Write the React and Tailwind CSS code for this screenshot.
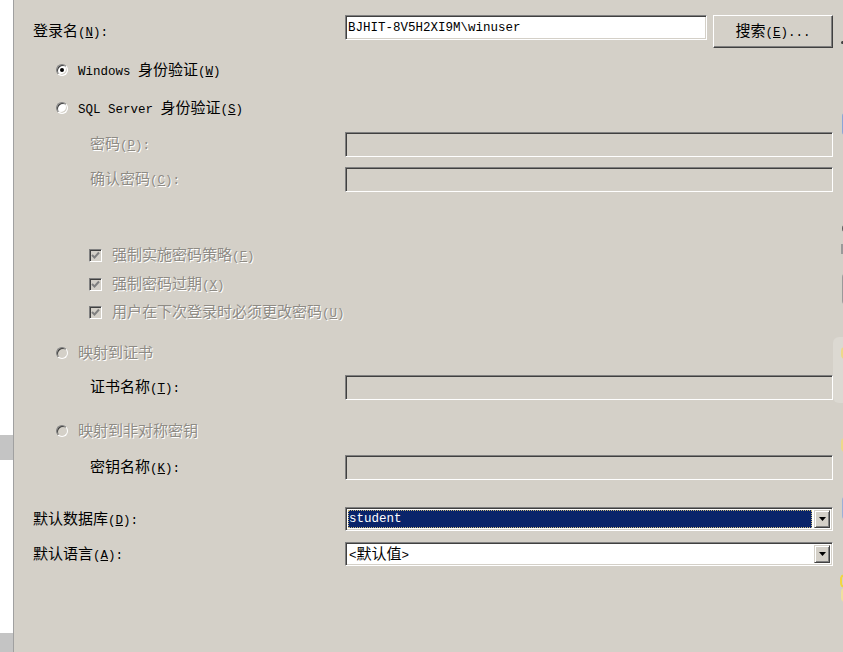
import React from 'react';

const CJK = /([\u2E80-\u9FFF\uFF00-\uFFEF\u3000-\u303F]+)/;

// Mixed run: CJK at SimSun-like 15px, latin half-width mono
const Txt = ({ s }) => {
    const parts = s.split(/(&.)/);
    return (
        <span className="whitespace-pre">
            {parts.map((p, i) => {
                if (p.startsWith('&') && p.length === 2) {
                    return (
                        <span key={i} className="underline text-[12.5px] font-['Liberation_Mono',monospace]">{p[1]}</span>
                    );
                }
                return p.split(CJK).map((r, j) =>
                    CJK.test(r) ? (
                        <span key={i + '-' + j} className="text-[15px] font-['Noto_Sans_CJK_SC',sans-serif]">{r}</span>
                    ) : (
                        <span key={i + '-' + j} className="text-[12.5px] font-['Liberation_Mono',monospace]">{r}</span>
                    )
                );
            })}
        </span>
    );
};

const Label = ({ s, off }) => (
    <div className={`leading-[16px] ${off ? 'text-[#8e8b85] [text-shadow:1px_1px_0_#ffffff]' : 'text-black'}`}>
        <Txt s={s} />
    </div>
);

const Sunken = ({ className = '', children }) => (
    <div className={`border border-t-[#808080] border-l-[#808080] border-b-white border-r-white shadow-[inset_1px_1px_0_#404040,inset_-1px_-1px_0_#d4d0c8] ${className}`}>
        {children}
    </div>
);

const Radio = ({ on, off }) => (
    <div className={`w-[12px] h-[12px] rounded-full border border-t-[#808080] border-l-[#808080] border-b-white border-r-white shadow-[inset_1px_1px_0_#404040,inset_-1px_-1px_0_#d4d0c8] flex items-center justify-center ${off ? 'bg-[#d4d0c8]' : 'bg-white'}`}>
        {on && <div className="w-[4px] h-[4px] rounded-full bg-black" />}
    </div>
);

const Check = () => (
    <Sunken className="w-[13px] h-[13px] bg-[#d4d0c8] flex items-center justify-center">
        <svg width="9" height="9" viewBox="0 0 9 9">
            <polyline points="1,4 3.5,6.5 8,1.5" fill="none" stroke="#808080" strokeWidth="2" />
        </svg>
    </Sunken>
);

const Arrow = () => (
    <div className="w-[16px] h-full border border-t-[#d4d0c8] border-l-[#d4d0c8] border-b-[#404040] border-r-[#404040] shadow-[inset_1px_1px_0_#ffffff,inset_-1px_-1px_0_#808080] bg-[#d4d0c8] flex items-center justify-center">
        <svg width="7" height="4" viewBox="0 0 7 4">
            <polygon points="0,0 7,0 3.5,4" fill="#000" />
        </svg>
    </div>
);

const FieldRow = ({ label, mt, dim, labelPad = 'pl-[57px]' }) => (
    <div className={`flex items-center h-[25px] ${mt}`}>
        <div className={`w-[312px] shrink-0 ${labelPad}`}>
            <Label s={label} off={dim} />
        </div>
        <Sunken className="w-[488px] h-[25px] bg-[#d4d0c8]" />
    </div>
);

const RadioRow = ({ label, mt, on, off }) => (
    <div className={`flex items-center h-[20px] pl-[23px] gap-[10px] ${mt}`}>
        <Radio on={on} off={off} />
        <Label s={label} off={off} />
    </div>
);

const CheckRow = ({ label, mt }) => (
    <div className={`flex items-center h-[20px] pl-[56px] gap-[10px] ${mt}`}>
        <Check />
        <Label s={label} off />
    </div>
);

export default function App() {
    return (
        <div className="w-[843px] h-[652px] flex overflow-hidden bg-[#d4d0c8]">
            {/* left strip of the window behind */}
            <div className="w-[14px] shrink-0 bg-white border-r border-[#a0a0a0] flex flex-col">
                <div className="h-[435px]" />
                <div className="h-[25px] bg-[#c4c4c4]" />
                <div className="flex-1" />
                <div className="h-[19px] bg-[#c4c4c4]" />
            </div>

            {/* dialog body */}
            <div className="w-[819px] shrink-0 pl-[19px] pt-[15px] flex flex-col">
                <div className="flex items-start h-[33px]">
                    <div className="w-[312px] shrink-0 mt-[7px]">
                        <Label s="登录名(&N):" />
                    </div>
                    <Sunken className="w-[362px] h-[25px] bg-white flex items-center pl-[2px]">
                        <span className="text-[12.5px] font-['Liberation_Mono',monospace] leading-[16px] text-black">BJHIT-8V5H2XI9M\winuser</span>
                    </Sunken>
                    <button className="ml-[6px] w-[120px] h-[33px] border border-t-white border-l-white border-b-[#404040] border-r-[#404040] shadow-[inset_-1px_-1px_0_#808080,inset_1px_1px_0_#d4d0c8] bg-[#d4d0c8] flex items-center justify-center">
                        <Label s="搜索(&E)..." />
                    </button>
                </div>

                <RadioRow label="Windows 身份验证(&W)" mt="mt-[12px]" on />
                <RadioRow label="SQL Server 身份验证(&S)" mt="mt-[18px]" />

                <FieldRow label="密码(&P):" mt="mt-[14px]" dim />
                <FieldRow label="确认密码(&C):" mt="mt-[10px]" dim />

                <CheckRow label="强制实施密码策略(&F)" mt="mt-[53px]" />
                <CheckRow label="强制密码过期(&X)" mt="mt-[9px]" />
                <CheckRow label="用户在下次登录时必须更改密码(&U)" mt="mt-[8px]" />

                <RadioRow label="映射到证书" mt="mt-[21px]" off />
                <FieldRow label="证书名称(&T):" mt="mt-[12px]" />

                <RadioRow label="映射到非对称密钥" mt="mt-[21px]" off />
                <FieldRow label="密钥名称(&K):" mt="mt-[14px]" />

                <div className="flex items-center h-[24px] mt-[27px]">
                    <div className="w-[312px] shrink-0">
                        <Label s="默认数据库(&D):" />
                    </div>
                    <Sunken className="w-[488px] h-[24px] bg-white flex p-[2px] gap-[2px]">
                        <div className="flex-1 bg-[#0a246a] outline outline-1 outline-dotted outline-[#c9b87a] -outline-offset-1 flex items-center pl-[1px]">
                            <span className="text-[12.5px] font-['Liberation_Mono',monospace] leading-[16px] text-white">student</span>
                        </div>
                        <Arrow />
                    </Sunken>
                </div>

                <div className="flex items-center h-[24px] mt-[11px]">
                    <div className="w-[312px] shrink-0">
                        <Label s="默认语言(&A):" />
                    </div>
                    <Sunken className="w-[488px] h-[24px] bg-white flex p-[2px]">
                        <div className="flex-1 flex items-center pl-[1px]">
                            <Label s="<默认值>" />
                        </div>
                        <Arrow />
                    </Sunken>
                </div>
            </div>

            {/* sliver of the neighbouring window */}
            <div className="flex-1 flex flex-col items-end">
                <div className="mt-[41px] w-[3px] h-[3px] rounded-full bg-[#404040] mr-[1px]" />
                <div className="mt-[69px] w-[3px] h-[22px] rounded-l-[3px] border-l-2 border-y border-[#8aa6d8] bg-white" />
                <div className="mt-[90px] w-[3px] h-[7px] rounded-l-full bg-[#606060]" />
                <div className="mt-[12px] w-[4px] h-[10px] bg-[#9a9a9a]" />
                <div className="mt-[20px] w-[3px] h-[30px] rounded-l-[4px] border-l border-y border-[#9a9a9a]" />
                <div className="mt-[33px] w-[12px] h-[66px] rounded-l-[6px] bg-[#dcd9d2] flex flex-col items-end pt-[10px]">
                    <div className="w-[4px] h-[12px] rounded-l-full bg-[#ecd98a]" />
                </div>
                <div className="mt-[35px] w-[4px] h-[14px] rounded-l-full bg-[#ecd98a]" />
                <div className="mt-[45px] w-[3px] h-[22px] rounded-l-[3px] border-l border-y border-[#9ab0d8]" />
                <div className="mt-[55px] w-[5px] h-[14px] rounded-l-full border-l-2 border-y-2 border-[#f2d640]" />
                <div className="w-[4px] h-[14px] rounded-l-full bg-[#efe0a0]" />
            </div>
        </div>
    );
}
